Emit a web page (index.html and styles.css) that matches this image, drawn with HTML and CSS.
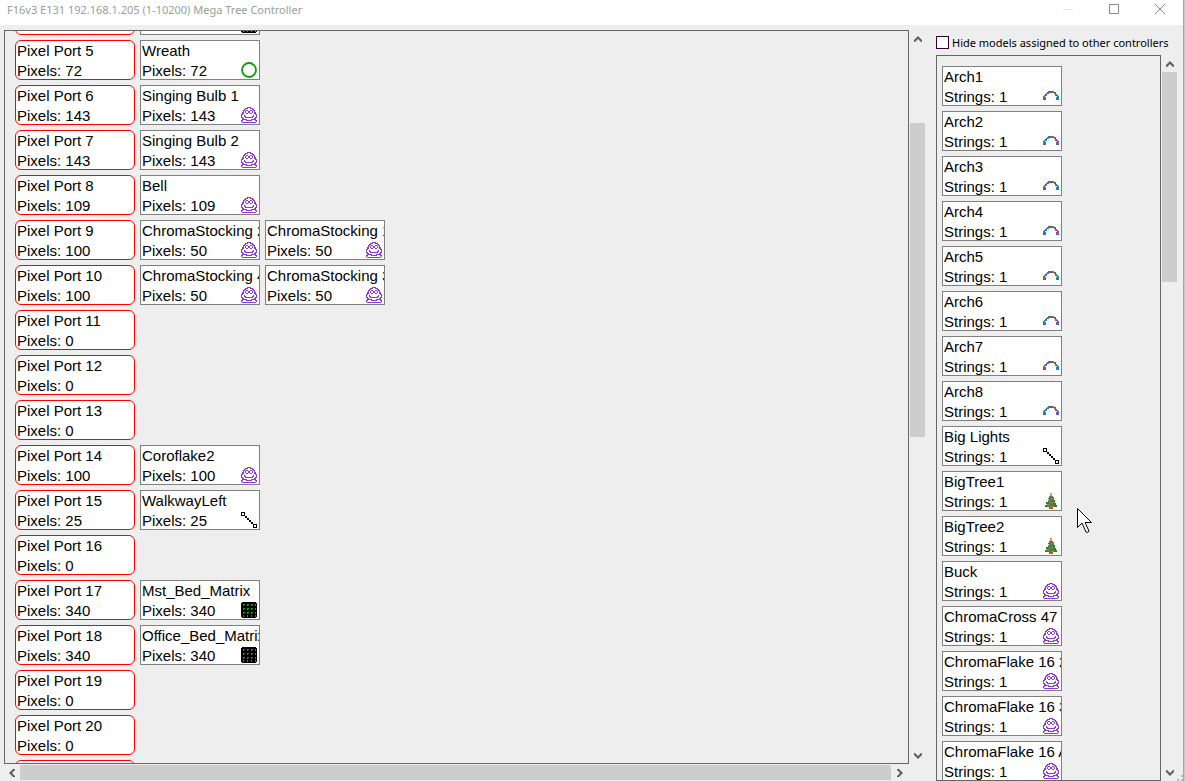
FILE: index.html
```html
<!DOCTYPE html>
<html lang="en">
<head>
<meta charset="utf-8">
<title>F16v3 E131 192.168.1.205 (1-10200) Mega Tree Controller</title>
<link rel="stylesheet" href="styles.css">
</head>
<body>
<svg class="defs" aria-hidden="true">
  <symbol id="custom" viewBox="0 0 16 16"><path fill="none" stroke="#9038d0" d="M6 .5h4M4 1.5h3M9 1.5h3M3 2.5h2M11 2.5h2M2 3.5h2M5 3.5h2M9 3.5h2M12 3.5h2M2 4.5h1M4 4.5h1M7 4.5h2M11 4.5h1M13 4.5h1M1 5.5h2M4 5.5h1M7 5.5h2M11 5.5h1M13 5.5h2M1 6.5h2M5 6.5h2M9 6.5h2M13 6.5h2M0 7.5h2M14 7.5h2M0 8.5h1M3 8.5h1M12 8.5h1M15 8.5h1M0 9.5h1M3 9.5h2M11 9.5h2M15 9.5h1M0 10.5h2M4 10.5h8M14 10.5h2M1 11.5h2M13 11.5h2M1 12.5h5M10 12.5h5M0 13.5h2M5 13.5h6M14 13.5h2M0 14.5h1M15 14.5h1M1 15.5h14"/></symbol>
  <symbol id="ring" viewBox="0 0 16 16"><circle cx="8" cy="8" r="7" fill="none" stroke="#0a9f0a" stroke-width="1.8"/></symbol>
  <symbol id="line" viewBox="0 0 16 16"><path fill="none" stroke="#000" d="M.5.5h3v3h-3zM12.500 12.500h3v3h-3z"/><path d="M4 4h2v2H4zM6 6h2v2H6zM8 8h2v2H8zM10 10h2v2h-2z"/></symbol>
  <symbol id="matrix" viewBox="0 0 16 16"><path d="M1 0h14v1h1v14h-1v1H1v-1H0V1h1z"/><path stroke="#00a817" stroke-width="2" stroke-dasharray="1 3" d="M2 3h13M2 7h13M2 11h13M2 14h13"/><path stroke="#00a817" stroke-dasharray="1 3" d="M3 2.500h12M3 6.500h12M3 10.500h12"/></symbol>
  <symbol id="matrix-dark" viewBox="0 0 16 16"><path d="M1 0h14v1h1v14h-1v1H1v-1H0V1h1z"/><path stroke="#777" stroke-dasharray="1 3" d="M2 2.500h13M2 6.500h13M2 10.500h13M2 14.500h13"/></symbol>
  <symbol id="arch" viewBox="0 0 16 16"><path fill="#1689d8" d="M0 9h3v3H0zM2 6h2v2H2zM4 4h2v2H4zM9 3h2v2H9zM12 6h2v2h-2zM13 9h3v3h-3z"/><path fill="#e02a35" d="M1 10h2v1H1zM2 6h2v1H2zM7 3h2v2H7zM11 4h2v2h-2zM13 9h2v1h-2z"/><path fill="#12a332" d="M0 8h2v1H0zM1 7h2v1H1zM5 3h2v1H5zM4 5h1v1H4zM9 4h1v1H9zM12 5h1v2h-1zM14 8h2v1h-2z"/><path fill="#8b38c8" d="M0 11h2v1H0zM3 5h1v2H3zM6 4h1v1H6zM8 3h1v1H8zM13 7h2v1h-2zM14 11h2v1h-2z"/></symbol>
  <symbol id="tree" viewBox="0 0 16 16"><path fill="#e1983e" d="M7 0h2v4H7z"/><path fill="#667653" d="M6 3h4v1h1v3h1v3h1v2h1v2H2v-2h2v-2h1V7h1z"/><path fill="#139116" d="M5 5h2v1H5zM10 7h2v2h-2zM3 9h3v2H3zM11 10h2v2h1v2h-4v-1h1zM2 12h3v2H2zM7 11h2v1H7z"/><path fill="#c3752a" d="M8 5h2v1H8zM6 7h1v1H6zM9 9h2v1H9zM5 11h2v1H5zM8 13h3v1H8zM7 9h1v1H7zM4 12h1v1H4z"/><path fill="#377bb0" d="M7 5h1v1H7zM8 7h1v1H8zM9 11h1v1H9zM5 9h1v1H5z"/><path fill="#b95a12" d="M6 14h4v2H6z"/></symbol>
  <symbol id="up" viewBox="0 0 8 6"><path fill="#606060" d="M4 0 8 4v2h-1L4 3 1 6H0V4z"/></symbol>
</svg>
<div class="window">
  <header class="titlebar">
    <h1 class="title">F16v3 E131 192.168.1.205 (1-10200) Mega Tree Controller</h1>
    <div class="window-buttons">
      <button class="window-button faint" aria-label="Minimize"><svg width="12" height="12"><path d="M1 6.500h10"/></svg></button>
      <button class="window-button" aria-label="Maximize"><svg width="12" height="12"><path d="M1.500 1.500h9v9h-9z"/></svg></button>
      <button class="window-button" aria-label="Close"><svg width="12" height="12"><path d="m1 1 10 10M11 1 1 11"/></svg></button>
    </div>
  </header>
  <main class="content">
    <section class="ports">
      <div class="panel">
        <div class="port-list">
          <div class="row"><div class="card port"></div><div class="card scrolled"><div class="detail"><svg class="icon"><use href="#matrix-dark"/></svg></div></div></div>
          <div class="row"><div class="card port"><span>Pixel Port 5</span><span>Pixels: 72</span></div><div class="card"><span>Wreath</span><div class="detail">Pixels: 72<svg class="icon smooth"><use href="#ring"/></svg></div></div></div>
          <div class="row"><div class="card port"><span>Pixel Port 6</span><span>Pixels: 143</span></div><div class="card"><span>Singing Bulb 1</span><div class="detail">Pixels: 143<svg class="icon"><use href="#custom"/></svg></div></div></div>
          <div class="row"><div class="card port"><span>Pixel Port 7</span><span>Pixels: 143</span></div><div class="card"><span>Singing Bulb 2</span><div class="detail">Pixels: 143<svg class="icon"><use href="#custom"/></svg></div></div></div>
          <div class="row"><div class="card port"><span>Pixel Port 8</span><span>Pixels: 109</span></div><div class="card"><span>Bell</span><div class="detail">Pixels: 109<svg class="icon"><use href="#custom"/></svg></div></div></div>
          <div class="row"><div class="card port"><span>Pixel Port 9</span><span>Pixels: 100</span></div><div class="card"><span>ChromaStocking 2</span><div class="detail">Pixels: 50<svg class="icon"><use href="#custom"/></svg></div></div><div class="card"><span>ChromaStocking 1</span><div class="detail">Pixels: 50<svg class="icon"><use href="#custom"/></svg></div></div></div>
          <div class="row"><div class="card port"><span>Pixel Port 10</span><span>Pixels: 100</span></div><div class="card"><span>ChromaStocking 4</span><div class="detail">Pixels: 50<svg class="icon"><use href="#custom"/></svg></div></div><div class="card"><span>ChromaStocking 3</span><div class="detail">Pixels: 50<svg class="icon"><use href="#custom"/></svg></div></div></div>
          <div class="row"><div class="card port"><span>Pixel Port 11</span><span>Pixels: 0</span></div></div>
          <div class="row"><div class="card port"><span>Pixel Port 12</span><span>Pixels: 0</span></div></div>
          <div class="row"><div class="card port"><span>Pixel Port 13</span><span>Pixels: 0</span></div></div>
          <div class="row"><div class="card port"><span>Pixel Port 14</span><span>Pixels: 100</span></div><div class="card"><span>Coroflake2</span><div class="detail">Pixels: 100<svg class="icon"><use href="#custom"/></svg></div></div></div>
          <div class="row"><div class="card port"><span>Pixel Port 15</span><span>Pixels: 25</span></div><div class="card"><span>WalkwayLeft</span><div class="detail">Pixels: 25<svg class="icon"><use href="#line"/></svg></div></div></div>
          <div class="row"><div class="card port"><span>Pixel Port 16</span><span>Pixels: 0</span></div></div>
          <div class="row"><div class="card port"><span>Pixel Port 17</span><span>Pixels: 340</span></div><div class="card"><span>Mst_Bed_Matrix</span><div class="detail">Pixels: 340<svg class="icon"><use href="#matrix"/></svg></div></div></div>
          <div class="row"><div class="card port"><span>Pixel Port 18</span><span>Pixels: 340</span></div><div class="card"><span>Office_Bed_Matrix</span><div class="detail">Pixels: 340<svg class="icon"><use href="#matrix"/></svg></div></div></div>
          <div class="row"><div class="card port"><span>Pixel Port 19</span><span>Pixels: 0</span></div></div>
          <div class="row"><div class="card port"><span>Pixel Port 20</span><span>Pixels: 0</span></div></div>
          <div class="row"><div class="card port"></div></div>
        </div>
      </div>
      <div class="scrollbar ports-scroll">
        <button class="arrow" aria-label="Scroll up"><svg><use href="#up"/></svg></button>
        <div class="space-before"></div><div class="thumb"></div><div class="space-after"></div>
        <button class="arrow down" aria-label="Scroll down"><svg><use href="#up"/></svg></button>
      </div>
      <div class="scrollbar across">
        <button class="arrow left" aria-label="Scroll left"><svg><use href="#up"/></svg></button>
        <div class="thumb"></div>
        <button class="arrow right" aria-label="Scroll right"><svg><use href="#up"/></svg></button>
      </div>
    </section>
    <aside class="models">
      <label class="hide-models"><input class="check" type="checkbox">Hide models assigned to other controllers</label>
      <div class="model-area">
        <div class="panel">
          <div class="model-list">
            <div class="card"><span>Arch1</span><div class="detail">Strings: 1<svg class="icon"><use href="#arch"/></svg></div></div>
            <div class="card"><span>Arch2</span><div class="detail">Strings: 1<svg class="icon"><use href="#arch"/></svg></div></div>
            <div class="card"><span>Arch3</span><div class="detail">Strings: 1<svg class="icon"><use href="#arch"/></svg></div></div>
            <div class="card"><span>Arch4</span><div class="detail">Strings: 1<svg class="icon"><use href="#arch"/></svg></div></div>
            <div class="card"><span>Arch5</span><div class="detail">Strings: 1<svg class="icon"><use href="#arch"/></svg></div></div>
            <div class="card"><span>Arch6</span><div class="detail">Strings: 1<svg class="icon"><use href="#arch"/></svg></div></div>
            <div class="card"><span>Arch7</span><div class="detail">Strings: 1<svg class="icon"><use href="#arch"/></svg></div></div>
            <div class="card"><span>Arch8</span><div class="detail">Strings: 1<svg class="icon"><use href="#arch"/></svg></div></div>
            <div class="card"><span>Big Lights</span><div class="detail">Strings: 1<svg class="icon"><use href="#line"/></svg></div></div>
            <div class="card"><span>BigTree1</span><div class="detail">Strings: 1<svg class="icon"><use href="#tree"/></svg></div></div>
            <div class="card"><span>BigTree2</span><div class="detail">Strings: 1<svg class="icon"><use href="#tree"/></svg></div></div>
            <div class="card"><span>Buck</span><div class="detail">Strings: 1<svg class="icon"><use href="#custom"/></svg></div></div>
            <div class="card"><span>ChromaCross 47</span><div class="detail">Strings: 1<svg class="icon"><use href="#custom"/></svg></div></div>
            <div class="card"><span>ChromaFlake 16 2</span><div class="detail">Strings: 1<svg class="icon"><use href="#custom"/></svg></div></div>
            <div class="card"><span>ChromaFlake 16 3</span><div class="detail">Strings: 1<svg class="icon"><use href="#custom"/></svg></div></div>
            <div class="card"><span>ChromaFlake 16 A</span><div class="detail">Strings: 1<svg class="icon"><use href="#custom"/></svg></div></div>
          </div>
        </div>
        <div class="scrollbar models-scroll">
          <button class="arrow" aria-label="Scroll up"><svg><use href="#up"/></svg></button>
          <div class="thumb"></div><div class="space-after"></div>
          <button class="arrow down" aria-label="Scroll down"><svg><use href="#up"/></svg></button>
        </div>
      </div>
    </aside>
  </main>
  <svg class="grip" width="6" height="6" aria-hidden="true"><path fill="#bbb" d="M4 0h2v2H4zM4 4h2v2H4zM0 4h2v2H0z"/></svg>
</div>
<svg class="cursor" width="17" height="28" aria-hidden="true"><path fill="#fff" stroke="#000" d="M.5.5v19l4.500-4.500 4 9q2 1.500 3-1l-4-8.500h6.500z"/></svg>
</body>
</html>
```

FILE: styles.css
```css
* { box-sizing: border-box; }

body {
  margin: 0;
  background: #c8c4c8;
  color: #000;
  font-family: "Liberation Sans", Arial, sans-serif;
  font-size: 15px;
  line-height: 20px;
}

button { padding: 0; border: 0; background: none; }
.defs { position: absolute; width: 0; height: 0; }

.window {
  position: relative;
  display: flex;
  flex-direction: column;
  height: 100vh;
  margin-right: 1px;
  border-right: 1px solid #a5a5a5;
  background: #eee;
}

.titlebar {
  display: flex;
  justify-content: space-between;
  flex: none;
  height: 25px;
  padding-left: 7px;
  background: #fff;
}

.title {
  margin: 0;
  color: #98a098;
  font: 11px/20px "Noto Sans", "Open Sans", sans-serif;
}

.window-buttons { display: flex; }
.window-button { display: grid; place-items: center; width: 46px; height: 18px; }
.window-button svg { fill: none; stroke: #888; }
.faint svg { stroke: #e4e4e4; }

.content {
  display: grid;
  grid-template-columns: minmax(0, 1fr) 242px;
  gap: 10px;
  flex: 1;
  min-height: 0;
  padding: 5px 5px 0 4px;
}

.panel { min-width: 0; min-height: 0; overflow: hidden; border: 1px solid #666; }

.ports {
  display: grid;
  grid-template-columns: minmax(0, 1fr) 17px;
  grid-template-rows: minmax(0, 1fr) 17px;
  min-height: 0;
}

.port-list, .model-list { display: flex; flex-direction: column; gap: 5px; }
.port-list { margin: -36px 0 0 10px; }
.row { display: flex; gap: 5px; }

.card {
  flex: none;
  width: 120px;
  height: 40px;
  padding-left: 1px;
  border: 1px solid #808080;
  background: #fff;
  white-space: nowrap;
}
.card > span { display: block; overflow: hidden; }
.port { border-color: #f00; border-radius: 6px; }
.scrolled { padding-top: 20px; }

.detail { display: flex; justify-content: space-between; padding-right: 2px; }
.icon { width: 16px; height: 16px; margin: 1px 0 0 auto; shape-rendering: crispEdges; }
.smooth { shape-rendering: auto; }

.scrollbar { display: flex; flex-direction: column; padding: 0 1px; }
.thumb { background: #cdcdcd; }
.arrow { display: grid; place-items: center; flex: none; width: 15px; height: 17px; }
.arrow svg { width: 8px; height: 6px; }
.down svg { transform: rotate(180deg); }
.left svg { transform: rotate(270deg); }
.right svg { transform: rotate(90deg); }

.ports-scroll .space-before { flex: 76; }
.ports-scroll .thumb { flex: 315; }
.ports-scroll .space-after { flex: 310; }

.across { flex-direction: row; padding: 1px 0; }
.across .arrow { width: 16px; height: 15px; }
.across .right { width: 18px; }
.across .thumb { flex: 1; }

.models { display: flex; flex-direction: column; min-height: 0; }
.hide-models {
  display: flex;
  align-items: center;
  gap: 3px;
  height: 25px;
  font: 11px/20px "Noto Sans", "Open Sans", sans-serif;
  white-space: nowrap;
}
.check {
  appearance: none;
  flex: none;
  width: 13px;
  height: 13px;
  margin: 0;
  border: 1px solid #303;
  background: #fff;
}
.model-area {
  display: grid;
  grid-template-columns: minmax(0, 1fr) 17px;
  flex: 1;
  min-height: 0;
}
.model-list { padding: 10px 5px; }
.models-scroll .thumb { flex: 210; }
.models-scroll .space-after { flex: 482; }

.grip { position: absolute; right: 0; bottom: 0; }
.cursor { position: absolute; left: 1077px; top: 508px; }
```
